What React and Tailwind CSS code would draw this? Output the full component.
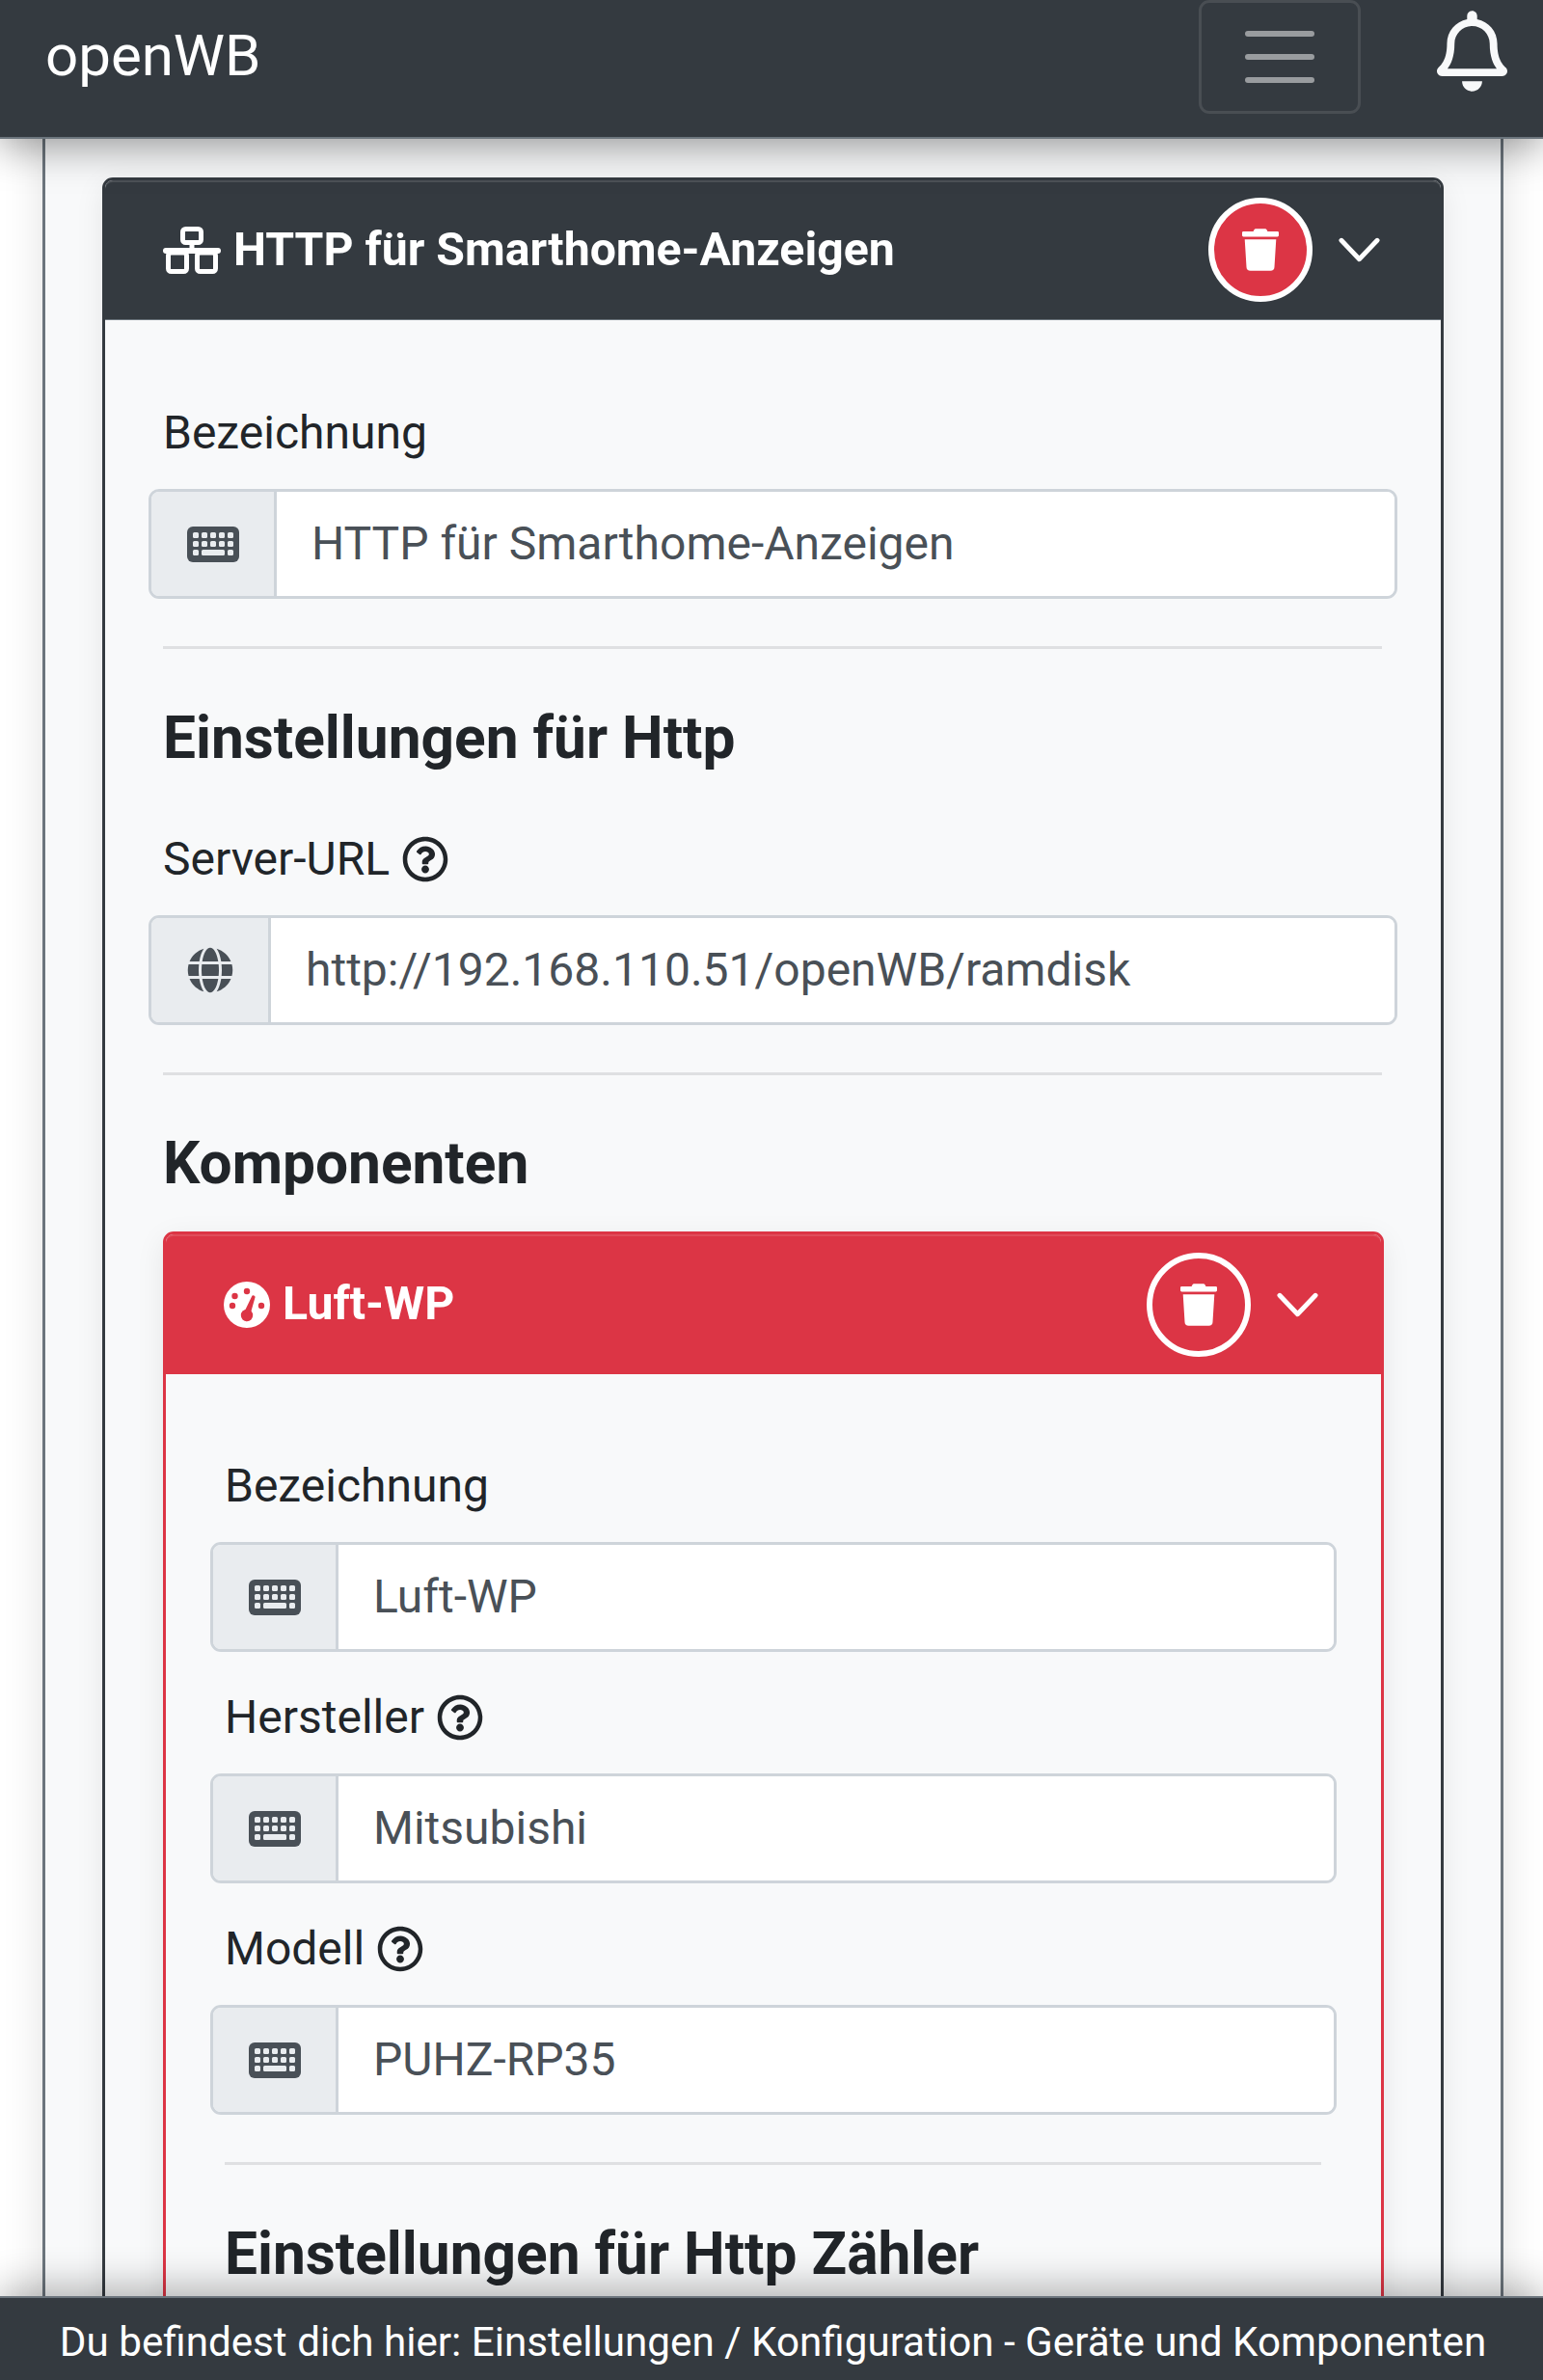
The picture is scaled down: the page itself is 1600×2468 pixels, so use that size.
import React from "react";
import { FaGlobe, FaTrash, FaRegQuestionCircle, FaRegBell } from "react-icons/fa";

const NetworkIcon = ({ className }) => (
  <svg viewBox="0 0 60 49" className={className} fill="none" stroke="currentColor" strokeWidth="5">
    <rect x="20.5" y="2.5" width="19" height="14" rx="3" />
    <path d="M30 17v8" />
    <path d="M3 25h54" strokeWidth="6" strokeLinecap="round" />
    <rect x="5.5" y="27" width="19" height="19.5" rx="3" />
    <rect x="35.5" y="27" width="19" height="19.5" rx="3" />
  </svg>
);

const GaugeIcon = ({ className }) => (
  <svg viewBox="0 0 48 48" className={className}>
    <circle cx="24" cy="24" r="24" fill="currentColor" />
    <g fill="#dc3545">
      <circle cx="11.5" cy="15" r="3.2" />
      <circle cx="24" cy="10" r="3.2" />
      <circle cx="39" cy="25" r="3.2" />
      <circle cx="9" cy="25" r="3.2" />
      <circle cx="24" cy="35" r="6.2" />
      <path d="M21 32L29 15.5a1.8 1.8 0 0 1 3.4 1.2L27.5 34z" />
    </g>
  </svg>
);

const KeyboardIcon = ({ className }) => (
  <svg viewBox="0 0 54 37" className={className}>
    <rect width="54" height="37" rx="6" fill="currentColor" />
    <g fill="#e9ecef">
      {[6, 15, 24, 33, 42].map((x) => (
        <React.Fragment key={x}>
          <rect x={x} y="6" width="6" height="6" rx="1.5" />
          <rect x={x} y="15" width="6" height="6" rx="1.5" />
        </React.Fragment>
      ))}
      <rect x="6" y="24" width="6" height="6" rx="1.5" />
      <rect x="15" y="24" width="24" height="6" rx="1.5" />
      <rect x="42" y="24" width="6" height="6" rx="1.5" />
    </g>
  </svg>
);

const Chevron = ({ className }) => (
  <svg viewBox="0 0 44 26" className={className} fill="none" stroke="currentColor" strokeWidth="5" strokeLinecap="round" strokeLinejoin="round">
    <path d="M3 3l19 20L41 3" />
  </svg>
);

const Field = ({ label, help, value, globe, addon = "w-[130px]" }) => (
  <div>
    <div className="flex items-center gap-[13px] h-[56px] ml-[15px] text-[48px] leading-[56px] text-[#212529]">
      <span>{label}</span>
      {help && <FaRegQuestionCircle className="w-[48px] h-[48px]" />}
    </div>
    <div className="flex h-[114px] mt-[30px] border-[3px] border-[#ced4da] rounded-[11px] overflow-hidden">
      <div className={`${addon} flex items-center justify-center bg-[#e9ecef] border-r-[3px] border-[#ced4da] text-[#495057] shrink-0`}>
        {globe ? <FaGlobe className="w-[48px] h-[48px]" /> : <KeyboardIcon className="w-[54px] h-[37px]" />}
      </div>
      <div className="flex-1 flex items-center bg-white text-[48px] text-[#495057] pl-[36px]">{value}</div>
    </div>
  </div>
);

const App = () => {
  return (
    <div className="relative h-[2468px] w-[1600px] overflow-hidden bg-white font-['Roboto',sans-serif]">
      {/* Kopfzeile */}
      <div className="absolute top-0 left-0 right-0 z-10 h-[144px] bg-[#343a40] border-b-[2px] border-[#6c757d] shadow-[0_8px_40px_rgba(0,0,0,0.4)] flex items-center">
        <span className="ml-[47px] mb-[26px] text-[60px] leading-none text-white">openWB</span>
        <div className="ml-auto self-start w-[168px] h-[118px] border-[3px] border-[#494e53] rounded-[11px] flex flex-col items-center justify-center gap-[18px]">
          <div className="w-[72px] h-[6px] rounded-sm bg-[#999c9f]" />
          <div className="w-[72px] h-[6px] rounded-sm bg-[#999c9f]" />
          <div className="w-[72px] h-[6px] rounded-sm bg-[#999c9f]" />
        </div>
        <FaRegBell className="w-[73px] h-[84px] ml-[79px] mr-[37px] mb-[36px] text-[#f8f9fa]" />
      </div>

      {/* Hauptbereich */}
      <div className="ml-[44px] mr-[41px] h-[2468px] pt-[184px] px-[59px] bg-[#f8f9fa] border-x-[3px] border-[#6c757d] shadow-[0_0_40px_rgba(0,0,0,0.12)]">
        <div className="border-[3px] border-[#343a40] rounded-[11px] shadow-[0_8px_30px_rgba(0,0,0,0.08)]">
          <div className="h-[145px] bg-[#343a40] rounded-t-[8px] shadow-[inset_0_2px_0_rgba(255,255,255,0.12)] border-b-[1px] border-[#6c757d] flex items-center pl-[60px] pr-[63px] text-white">
            <NetworkIcon className="w-[60px] h-[49px] mr-[13px]" />
            <span className="text-[48.2px] font-bold">HTTP für Smarthome-Anzeigen</span>
            <div className="ml-auto w-[108px] h-[108px] rounded-full border-[6px] border-white bg-[#dc3545] flex items-center justify-center">
              <FaTrash className="w-[38px] h-[44px]" />
            </div>
            <Chevron className="w-[43px] h-[26px] ml-[27px]" />
          </div>

          <div className="px-[45px] pt-[89px] pb-[60px]">
            <Field label="Bezeichnung" value="HTTP für Smarthome-Anzeigen" />
            <hr className="mt-[49px] ml-[15px] mr-[16px] border-t-[3px] border-[#dfe0e2]" />
            <h3 className="ml-[15px] mt-[57px] text-[60.4px] leading-[72px] font-bold text-[#212529]">Einstellungen für Http</h3>
            <div className="mt-[61px]">
              <Field label="Server-URL" help value="http://192.168.110.51/openWB/ramdisk" globe addon="w-[124px]" />
            </div>
            <hr className="mt-[49px] ml-[15px] mr-[16px] border-t-[3px] border-[#dfe0e2]" />
            <h3 className="ml-[15px] mt-[56px] text-[60.4px] leading-[72px] font-bold text-[#212529]">Komponenten</h3>

            {/* Komponente */}
            <div className="mt-[34px] ml-[15px] mr-[14px] border-[3px] border-[#dc3545] rounded-[11px] shadow-[0_8px_30px_rgba(0,0,0,0.08)]">
              <div className="h-[145px] bg-[#dc3545] rounded-t-[8px] shadow-[inset_0_2px_0_rgba(255,255,255,0.12)] flex items-center pl-[60px] pr-[65px] text-white">
                <GaugeIcon className="w-[48px] h-[48px] mr-[13px]" />
                <span className="text-[48.2px] font-bold">Luft-WP</span>
                <div className="ml-auto w-[108px] h-[108px] rounded-full border-[6px] border-white flex items-center justify-center">
                  <FaTrash className="w-[38px] h-[44px]" />
                </div>
                <Chevron className="w-[43px] h-[26px] ml-[27px]" />
              </div>
              <div className="px-[46px] pt-[88px] pb-[60px]">
                <div className="flex flex-col gap-[40px]">
                  <Field label="Bezeichnung" value="Luft-WP" />
                  <Field label="Hersteller" help value="Mitsubishi" />
                  <Field label="Modell" help value="PUHZ-RP35" />
                </div>
                <hr className="mt-[49px] ml-[15px] mr-[16px] border-t-[3px] border-[#dfe0e2]" />
                <h3 className="ml-[15px] mt-[57px] text-[60.4px] leading-[72px] font-bold text-[#212529]">Einstellungen für Http Zähler</h3>
              </div>
            </div>
          </div>
        </div>
      </div>

      {/* Fusszeile */}
      <div className="absolute bottom-0 left-0 right-0 z-10 h-[87px] pt-[6px] pl-[3px] bg-[#343a40] border-t-[2px] border-[#6c757d] shadow-[0_-8px_40px_rgba(0,0,0,0.3)] flex items-center justify-center text-[42.2px] text-white">
        Du befindest dich hier: Einstellungen / Konfiguration - Geräte und Komponenten
      </div>
    </div>
  );
};

export default App;
